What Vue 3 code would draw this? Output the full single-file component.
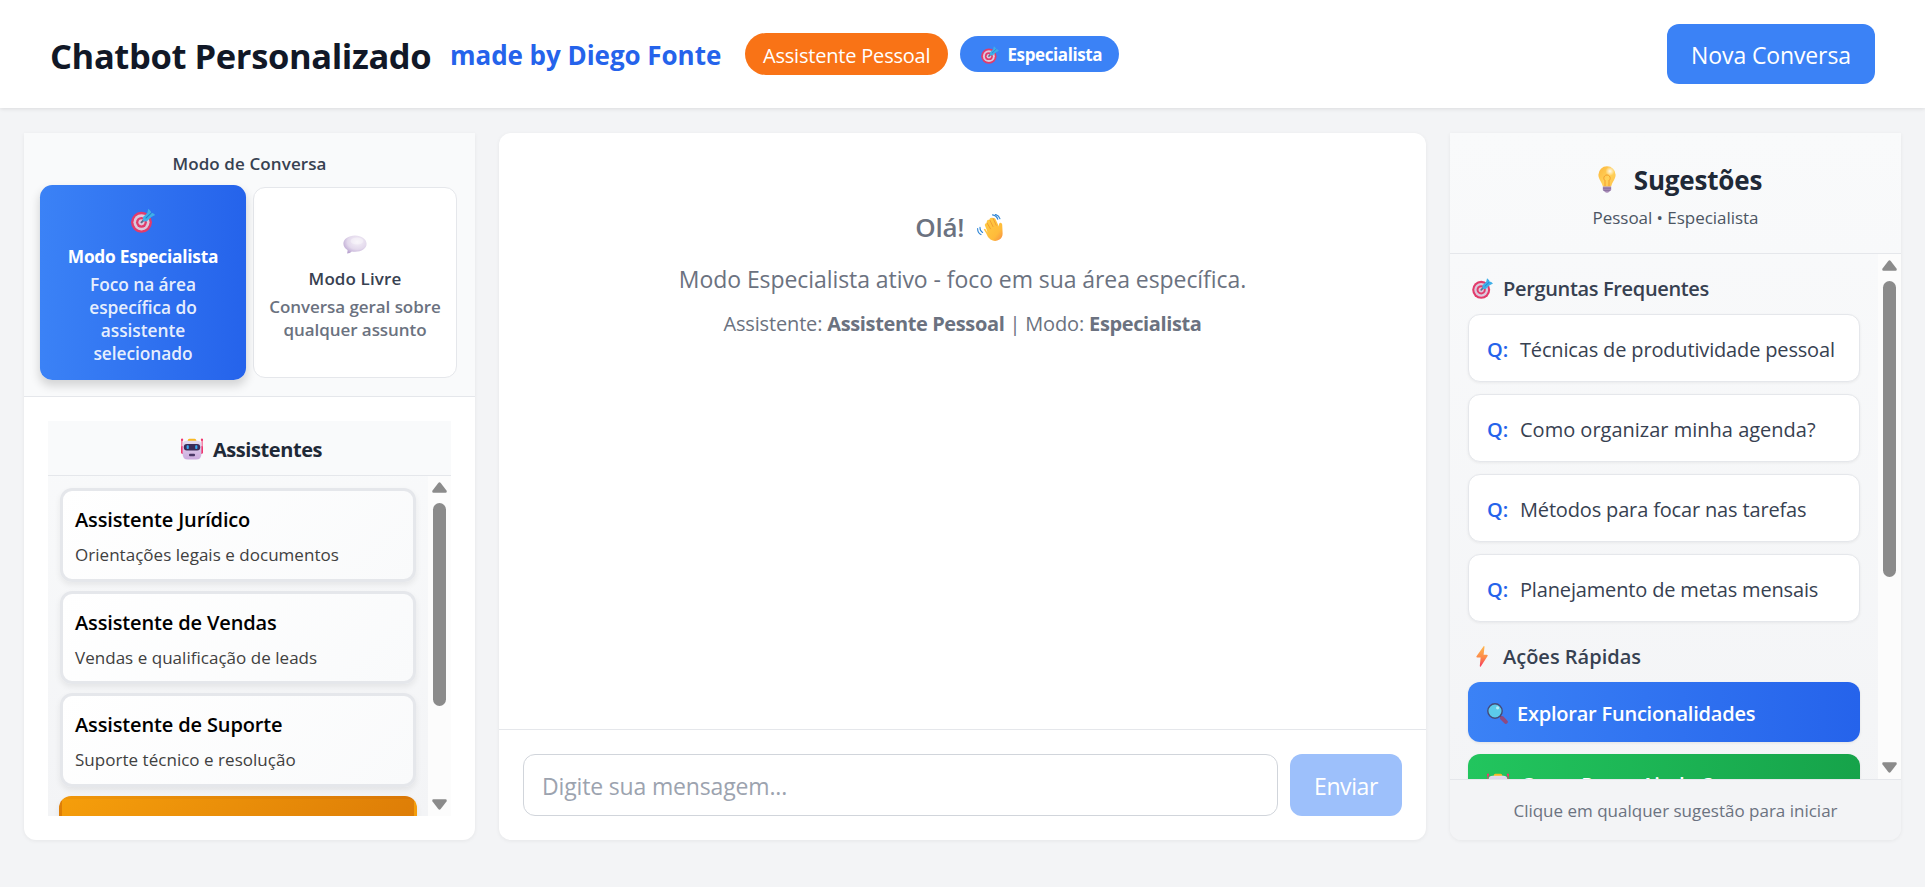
<script setup>
import { ref } from 'vue'

const message = ref('')

const modes = [
  { icon: 'target', name: 'Modo Especialista', text: 'Foco na área específica do assistente selecionado', active: true },
  { icon: 'balloon', name: 'Modo Livre', text: 'Conversa geral sobre qualquer assunto', active: false },
]

const assistants = [
  { name: 'Assistente Jurídico', text: 'Orientações legais e documentos' },
  { name: 'Assistente de Vendas', text: 'Vendas e qualificação de leads' },
  { name: 'Assistente de Suporte', text: 'Suporte técnico e resolução' },
]

const questions = [
  { text: 'Técnicas de produtividade pessoal', fit: 'tight' },
  { text: 'Como organizar minha agenda?', fit: 'normal' },
  { text: 'Métodos para focar nas tarefas', fit: 'tight' },
  { text: 'Planejamento de metas mensais', fit: 'tight' },
]
</script>

<template>
  <div class="page">
    <svg class="defs" width="0" height="0" aria-hidden="true">
      <defs>
        <linearGradient id="g-bulb" x1="0" y1="0" x2="1" y2="1">
          <stop offset="0" stop-color="#fdb53a" /><stop offset=".55" stop-color="#ffd25a" /><stop offset="1" stop-color="#ffc04a" />
        </linearGradient>
        <radialGradient id="g-shine"><stop offset="0" stop-color="#fff" /><stop offset="1" stop-color="#fff" stop-opacity="0" /></radialGradient>
        <linearGradient id="g-bolt" x1="0" y1="0" x2="0" y2="1">
          <stop offset="0" stop-color="#ffb84d" /><stop offset=".55" stop-color="#fc8a4a" /><stop offset="1" stop-color="#f8395e" />
        </linearGradient>
        <linearGradient id="g-face" x1="0" y1="0" x2="0" y2="1">
          <stop offset="0" stop-color="#e4dcf0" /><stop offset="1" stop-color="#cba9dd" />
        </linearGradient>
        <radialGradient id="g-balloon" cx=".6" cy=".35" r=".7">
          <stop offset="0" stop-color="#f5f0f8" /><stop offset=".6" stop-color="#e3d9ec" /><stop offset="1" stop-color="#b9a3d0" />
        </radialGradient>
        <linearGradient id="g-hand" x1="0" y1="0" x2="1" y2="1">
          <stop offset="0" stop-color="#ffce45" /><stop offset=".7" stop-color="#ffbb3a" /><stop offset="1" stop-color="#f58a45" />
        </linearGradient>
      </defs>
      <symbol id="target" viewBox="0 0 24 24">
        <circle cx="10.5" cy="13.5" r="10.3" fill="#e23b6b" />
        <circle cx="10.5" cy="13.5" r="7.9" fill="#dcc8dc" />
        <circle cx="10.5" cy="13.5" r="5.3" fill="#e23b6b" />
        <circle cx="10.5" cy="13.5" r="3" fill="#dcc8dc" />
        <path d="M10.5 13.5L16.5 7.5" stroke="#5b6c8c" stroke-width="1.9" stroke-linecap="round" />
        <path d="M11.8 8.6L16.2 4.4L17.2 .2L19.6 2.6L20 4.5L21.6 4.4L24 6.4L20.2 8.2L15.6 12.6L12.2 12.3Z" fill="#3fafe8" />
        <path d="M14.6 9.6L20 4.4" stroke="#1f80cf" stroke-width="1" />
      </symbol>
      <symbol id="balloon" viewBox="0 0 24 19">
        <path d="M12 .5C5.4 .5 .4 4.1 .4 8.8c0 2.5 1.6 4.7 4.1 6.1 .2 1.4-.2 2.5-.5 3.6 2.1 0 3.6-.8 4.8-2 1 .2 2.1.3 3.2.3 6.6 0 11.6-3.5 11.6-8S18.600 .5 12 .5Z" fill="url(#g-balloon)" />
        <ellipse cx="14" cy="6" rx="6.500" ry="3.500" fill="#fff" opacity=".35" />
      </symbol>
      <symbol id="robot" viewBox="0 0 22 22">
        <path d="M.9 2V11M21.100 2V11" stroke="#f0376f" stroke-width="1" />
        <circle cx="1" cy="1.800" r="1.200" fill="#f0376f" /><circle cx="21" cy="1.800" r="1.200" fill="#f0376f" />
        <rect x="0" y="8" width="3" height="8" rx="1.400" fill="#f0376f" /><rect x="19" y="8" width="3" height="8" rx="1.400" fill="#f0376f" />
        <rect x="6.800" y=".8" width="8.400" height="4" rx="1.500" fill="#f9b824" />
        <path d="M5.500 2.800H16.500Q20.400 2.800 20.400 7V16Q20.400 21.600 15 21.600H7Q1.600 21.600 1.600 16V7Q1.600 2.800 5.500 2.800Z" fill="url(#g-face)" />
        <rect x="2.800" y="6" width="16.400" height="6.400" rx="3" fill="#3b2b57" />
        <rect x="5.600" y="7.300" width="2.200" height="3.800" rx=".8" fill="#35a8f0" /><rect x="14.200" y="7.300" width="2.200" height="3.800" rx=".8" fill="#35a8f0" />
        <rect x="8" y="15.800" width="6" height="2.400" rx="1" fill="#4a3866" />
      </symbol>
      <symbol id="bulb" viewBox="0 0 18 27">
        <path d="M9 .3A8.600 8.600 0 0 0 .4 8.800C.4 13 3.200 15 4.500 19.500Q4.800 20.800 6 20.800H12Q13.200 20.800 13.500 19.500C14.800 15 17.600 13 17.600 8.800A8.600 8.600 0 0 0 9 .3Z" fill="url(#g-bulb)" />
        <circle cx="12" cy="5.200" r="4.600" fill="url(#g-shine)" opacity=".9" />
        <path d="M7 20V14.600M11 20V14.600M7.200 14.800A3.200 3.200 0 1 1 10.800 14.800" fill="none" stroke="#f59f2c" stroke-width="1" />
        <path d="M4.800 20.500H13.200V24L11.500 25.500Q9 28 6.500 25.500L4.800 24Z" fill="#a98cb8" />
        <path d="M5 22.200H13M5.400 24.300H12.400" stroke="#7c6496" stroke-width=".8" />
      </symbol>
      <symbol id="bolt" viewBox="0 0 12 21">
        <path d="M7.600 .2L.5 10.300Q.1 11.400 1.200 11.400H4.600L3.800 20Q4 21.200 4.800 20.400L11.600 10Q12 8.800 10.900 8.800H7.600L8.500 .8Q8.300-.4 7.600 .2Z" fill="url(#g-bolt)" />
      </symbol>
      <symbol id="magnifier" viewBox="0 0 21 21">
        <path d="M12.500 12.500L15.500 15.500" stroke="#55506e" stroke-width="2" />
        <path d="M15 15L18.800 18.800" stroke="#8f4a80" stroke-width="4" stroke-linecap="round" />
        <circle cx="8" cy="8" r="7.200" fill="#5ccbea" stroke="#464a78" stroke-width="1.400" />
        <circle cx="10.600" cy="4.800" r="1.600" fill="#b8ecf7" />
      </symbol>
      <symbol id="wave" viewBox="0 0 26 27">
        <path d="M6.800 15.500L9 19Q10.600 23.500 13.500 25.500Q18 28.200 22.500 25.600Q25.800 23.500 25.600 19L25.200 10.500Q24.800 8.600 23.200 8.800Q21.800 9.200 21.900 11V12.600L18.600 5.200Q17.600 3.400 16 4.200Q15 3.200 13.500 4Q12.300 4.800 12.800 6Q10.600 5.300 9.900 7Q9.600 7.900 10 8.900Q8 8.900 7.800 10.700Q7.800 11.400 8.200 12.200L9.600 15.500L10.500 18.800L8.600 15.200Q7.200 14 6.800 15.500Z" fill="url(#g-hand)" />
        <path d="M12.800 6L16 12.600M10 8.900L13.500 14.800M16 4.200L19.200 11.300" stroke="#ec9430" stroke-width=".8" stroke-linecap="round" fill="none" />
        <path d="M15.500 .9Q19.500 1.400 20.800 5.200M18.500 .4Q22 1.600 23 4.800M.6 14.500Q.6 18.800 4 20.600M3 13.200Q2.800 16.800 5.600 18.400" stroke="#2f86d6" stroke-width="1.100" stroke-linecap="round" fill="none" />
      </symbol>
      <symbol id="arrow" viewBox="0 0 15 11">
        <path d="M6.300 1Q7.500-.4 8.700 1L14.500 8.600Q15.300 10.600 13.500 10.800H1.500Q-.3 10.600 .5 8.600Z" fill="#8b8b8b" />
      </symbol>
    </svg>

    <header class="topbar">
      <h1>Chatbot Personalizado</h1>
      <span class="author">made by Diego Fonte</span>
      <span class="badge badge-assistant"><span>Assistente Pessoal</span></span>
      <span class="badge badge-mode"><svg width="18" height="18"><use href="#target" /></svg>Especialista</span>
      <button class="new-chat">Nova Conversa</button>
    </header>

    <main class="columns">
      <aside class="panel left">
        <section class="mode-section">
          <h3>Modo de Conversa</h3>
          <div class="modes">
            <button v-for="m in modes" :key="m.name" class="mode" :class="{ active: m.active }">
              <span class="mode-icon"><svg width="24" :height="m.icon === 'target' ? 24 : 19"><use :href="'#' + m.icon" /></svg></span>
              <span class="mode-name">{{ m.name }}</span>
              <span class="mode-text">{{ m.text }}</span>
            </button>
          </div>
        </section>
        <section class="assist-wrap">
          <div class="assist">
            <h3><svg width="22" height="22"><use href="#robot" /></svg>Assistentes</h3>
            <div class="scroller">
              <div class="assist-list">
                <button v-for="a in assistants" :key="a.name" class="card">
                  <span class="card-name">{{ a.name }}</span>
                  <span class="card-text">{{ a.text }}</span>
                </button>
                <button class="card selected"></button>
              </div>
              <div class="scrollbar">
                <svg width="15" height="11"><use href="#arrow" /></svg>
                <div class="thumb thumb-left"></div>
                <svg class="down" width="15" height="11"><use href="#arrow" /></svg>
              </div>
            </div>
          </div>
        </section>
      </aside>

      <section class="panel chat">
        <div class="welcome">
          <h2>Olá!<svg width="26" height="27"><use href="#wave" /></svg></h2>
          <p class="intro">Modo Especialista ativo - foco em sua área específica.</p>
          <p class="status">Assistente: <b>Assistente Pessoal</b> | Modo: <b>Especialista</b></p>
        </div>
        <form class="composer" @submit.prevent>
          <input v-model="message" type="text" placeholder="Digite sua mensagem..." />
          <button>Enviar</button>
        </form>
      </section>

      <aside class="panel right">
        <div class="sug-head">
          <h2><svg width="18" height="27"><use href="#bulb" /></svg>Sugestões</h2>
          <p>Pessoal • Especialista</p>
        </div>
        <div class="scroller">
          <div class="sug-list">
            <h4 class="faq"><svg width="21" height="21"><use href="#target" /></svg>Perguntas Frequentes</h4>
            <div class="questions">
              <button v-for="q in questions" :key="q.text" class="question">
                <b>Q:</b><span :class="q.fit">{{ q.text }}</span>
              </button>
            </div>
            <h4 class="quick"><svg width="12" height="21"><use href="#bolt" /></svg>Ações Rápidas</h4>
            <button class="action blue"><svg width="21" height="21"><use href="#magnifier" /></svg>Explorar Funcionalidades</button>
            <button class="action green"><svg width="22" height="22"><use href="#robot" /></svg>Como Posso Ajudar?</button>
          </div>
          <div class="scrollbar">
            <svg width="15" height="11"><use href="#arrow" /></svg>
            <div class="thumb thumb-right"></div>
            <svg class="down" width="15" height="11"><use href="#arrow" /></svg>
          </div>
        </div>
        <footer>Clique em qualquer sugestão para iniciar</footer>
      </aside>
    </main>
  </div>
</template>

<style>
body { margin: 0; background: #f3f4f6; }
</style>

<style scoped>
.page {
  height: 887px;
  display: flex;
  flex-direction: column;
  overflow: hidden;
  background: #f3f4f6;
  font-family: "Open Sans", "Noto Sans", sans-serif;
}
.page * { box-sizing: border-box; }
.defs { position: absolute; }
h1, h2, h3, h4, p { margin: 0; }
button { font-family: inherit; border: 0; padding: 0; margin: 0; }
svg { flex: none; display: block; }

.topbar {
  height: 108px;
  flex: none;
  display: flex;
  align-items: center;
  padding: 0 50px;
  background: #fff;
  box-shadow: 0 1px 4px rgba(0, 0, 0, .1);
}
h1 { width: 400px; padding-top: 3px; font-size: 34.5px; line-height: 54px; font-weight: 700; letter-spacing: -.38px; color: #111827; white-space: nowrap; }
.author { width: 295px; padding-top: 2px; font-size: 26px; font-weight: 700; letter-spacing: -.04px; color: #2563eb; white-space: nowrap; }
.badge { display: flex; align-items: center; color: #fff; white-space: nowrap; }
.badge-assistant { height: 42px; width: 203px; padding: 2px 0 0 18px; border-radius: 21px; background: #f97316; font-size: 20px; letter-spacing: -.2px; }
.badge-mode { height: 36px; width: 159px; margin-left: 12px; padding: 1px 0 0 21px; border-radius: 18px; background: #3b82f6; font-size: 17px; font-weight: 700; letter-spacing: -.4px; }
.badge-mode svg { margin-right: 8.500px; }
.new-chat { margin-left: auto; width: 208px; height: 60px; padding-top: 2px; border-radius: 12px; background: #3b82f6; color: #fff; font-size: 23px; letter-spacing: -.12px; }

.columns {
  flex: none;
  height: 707px;
  margin: 25px 24px 0;
  display: grid;
  grid-template-columns: 451px 927px 451px;
  gap: 24px;
}
.panel { min-height: 0; display: flex; flex-direction: column; background: #fff; box-shadow: 0 1px 4px rgba(0, 0, 0, .06); }
.left, .right { border-radius: 0 0 12px 12px; }
.chat { border-radius: 12px; }

.mode-section { height: 264px; flex: none; padding: 18px 18px 0; background: #f9fafb; border-bottom: 1px solid #e5e7eb; }
.mode-section h3 { height: 24px; margin-bottom: 12px; text-align: center; font-size: 17px; line-height: 25px; font-weight: 600; letter-spacing: .1px; color: #374151; }
.modes { display: grid; grid-template-columns: 202px 204px; gap: 9px; height: 191px; }
.mode { display: flex; flex-direction: column; align-items: center; justify-content: center; padding: 1px 12px 0; border: 1px solid #e5e7eb; border-radius: 12px; background: #fff; color: #374151; font-size: 17px; font-weight: 600; }
.mode-icon { display: flex; align-items: center; height: 36px; margin-bottom: 5px; padding-top: 3px; }
.mode-name { line-height: 25px; letter-spacing: .12px; }
.mode-text { margin-top: 5px; line-height: 22.500px; color: #6b7280; letter-spacing: -.06px; }
.mode.active { transform: scale(1.02); padding-top: 1px; border: 0; background: linear-gradient(90deg, #3b82f6, #2563eb); color: #fff; box-shadow: 0 5px 9px rgba(0, 0, 0, .15); }
.mode.active .mode-name { font-weight: 700; letter-spacing: -.25px; }
.mode.active .mode-text { padding: 0 22px; color: rgba(255, 255, 255, .9); }

.assist-wrap { flex: 1; min-height: 0; padding: 24px; }
.assist { height: 395px; display: flex; flex-direction: column; background: linear-gradient(180deg, #f9fafb, #f3f4f6); }
.assist h3 { height: 55px; flex: none; display: flex; align-items: center; justify-content: center; padding-top: 2px; background: #f9fafb; border-bottom: 1px solid #e5e7eb; font-size: 20px; font-weight: 700; letter-spacing: -.42px; color: #1f2937; }
.assist h3 svg { margin: -1px 10px 0 4px; }
.scroller { flex: 1; min-height: 0; display: flex; overflow: hidden; }
.assist-list { flex: 1; display: flex; flex-direction: column; gap: 9px; padding: 12px; }
.card { flex: none; height: 93.700px; display: flex; flex-direction: column; align-items: flex-start; padding: 13px 12px 0; border: 3px solid #e5e7eb; border-radius: 12px; background: linear-gradient(135deg, #fff, #f9fafb); box-shadow: 0 3px 6px rgba(0, 0, 0, .07); }
.card-name { font-size: 20px; line-height: 32px; font-weight: 600; letter-spacing: -.14px; color: #000; }
.card-text { margin-top: 7px; font-size: 17px; line-height: 24px; letter-spacing: .03px; color: #404040; }
.card.selected { margin: 0 -1px; border-color: transparent; background: linear-gradient(135deg, #f59e0b, #d97706); }

.scrollbar { width: 23px; flex: none; display: flex; flex-direction: column; align-items: center; padding: 6px 0; background: #fcfcfc; }
.scrollbar .down { transform: rotate(180deg); margin-top: auto; }
.thumb { width: 13px; margin-top: 10px; border-radius: 7px; background: #8b8b8b; }
.thumb-left { height: 203px; }
.thumb-right { height: 296px; }

.welcome { flex: 1; padding-top: 73px; color: #6b7280; text-align: center; }
.welcome h2 { display: flex; align-items: center; justify-content: center; height: 42px; font-size: 26px; font-weight: 600; letter-spacing: -.2px; }
.welcome h2 svg { margin: 0 6.500px 0 13px; }
.intro { margin-top: 13px; font-size: 23px; line-height: 36px; letter-spacing: -.07px; }
.status { margin-top: 12px; font-size: 20px; line-height: 30px; letter-spacing: -.16px; }
.status b { font-weight: 700; letter-spacing: -.38px; }
.composer { height: 111px; flex: none; display: flex; gap: 12px; padding: 24px; border-top: 1px solid #e5e7eb; }
.composer input { flex: 1; padding: 1px 19px 0 18px; border: 1px solid #d1d5db; border-radius: 12px; background: #fff; font-family: inherit; font-size: 23px; letter-spacing: -.16px; color: #111827; outline: none; }
.composer input::placeholder { color: #9ca3af; opacity: 1; }
.composer button { width: 112px; padding-top: 1px; border-radius: 12px; background: #9dc0fb; color: #fff; font-size: 23px; letter-spacing: -.4px; }

.right { background: linear-gradient(180deg, #f9fafb, #f3f4f6); }
.sug-head { height: 121px; flex: none; padding-top: 24px; text-align: center; border-bottom: 1px solid #e5e7eb; }
.sug-head h2 { display: flex; align-items: center; justify-content: center; height: 42px; padding-top: 3px; font-size: 26px; font-weight: 700; letter-spacing: -.2px; color: #1f2937; }
.sug-head h2 svg { margin: 0 18px 0 9px; }
.sug-head p { margin-top: 5px; font-size: 17px; line-height: 27px; letter-spacing: -.04px; color: #4b5563; }
.sug-list { flex: 1; padding: 18px; }
h4 { display: flex; align-items: center; height: 32px; font-size: 20px; font-weight: 600; color: #374151; }
.faq { letter-spacing: -.34px; margin-bottom: 10px; }
.faq svg { margin: 0 10px 0 4px; }
.quick { margin: 18px 0 10px; }
.quick svg { margin: 0 15px 0 8px; }
.questions { display: flex; flex-direction: column; gap: 12px; }
.question { display: flex; align-items: center; height: 68px; padding: 2px 0 0 18px; border: 1px solid #e5e7eb; border-radius: 12px; background: #fff; box-shadow: 0 1px 3px rgba(0, 0, 0, .06); font-size: 20px; color: #374151; text-align: left; white-space: nowrap; }
.question b { width: 33px; font-weight: 600; color: #2563eb; }
.tight { letter-spacing: -.16px; }
.normal { letter-spacing: 0; }
.action { display: flex; align-items: center; width: 100%; height: 60px; margin-bottom: 12px; padding: 2px 0 0 19px; border-radius: 12px; color: #fff; font-size: 20px; font-weight: 600; letter-spacing: -.22px; box-shadow: 0 1px 3px rgba(0, 0, 0, .08); }
.action svg { margin-right: 9px; }
.blue { background: linear-gradient(90deg, #3b82f6, #2563eb); }
.green { padding-top: 0; background: linear-gradient(90deg, #22c55e, #16a34a); }
.green svg { margin-right: 12px; }
footer { height: 61px; flex: none; border-top: 1px solid #e5e7eb; border-radius: 0 0 12px 12px; background: #f3f4f6; text-align: center; font-size: 17px; line-height: 62px; color: #6b7280; }
</style>
